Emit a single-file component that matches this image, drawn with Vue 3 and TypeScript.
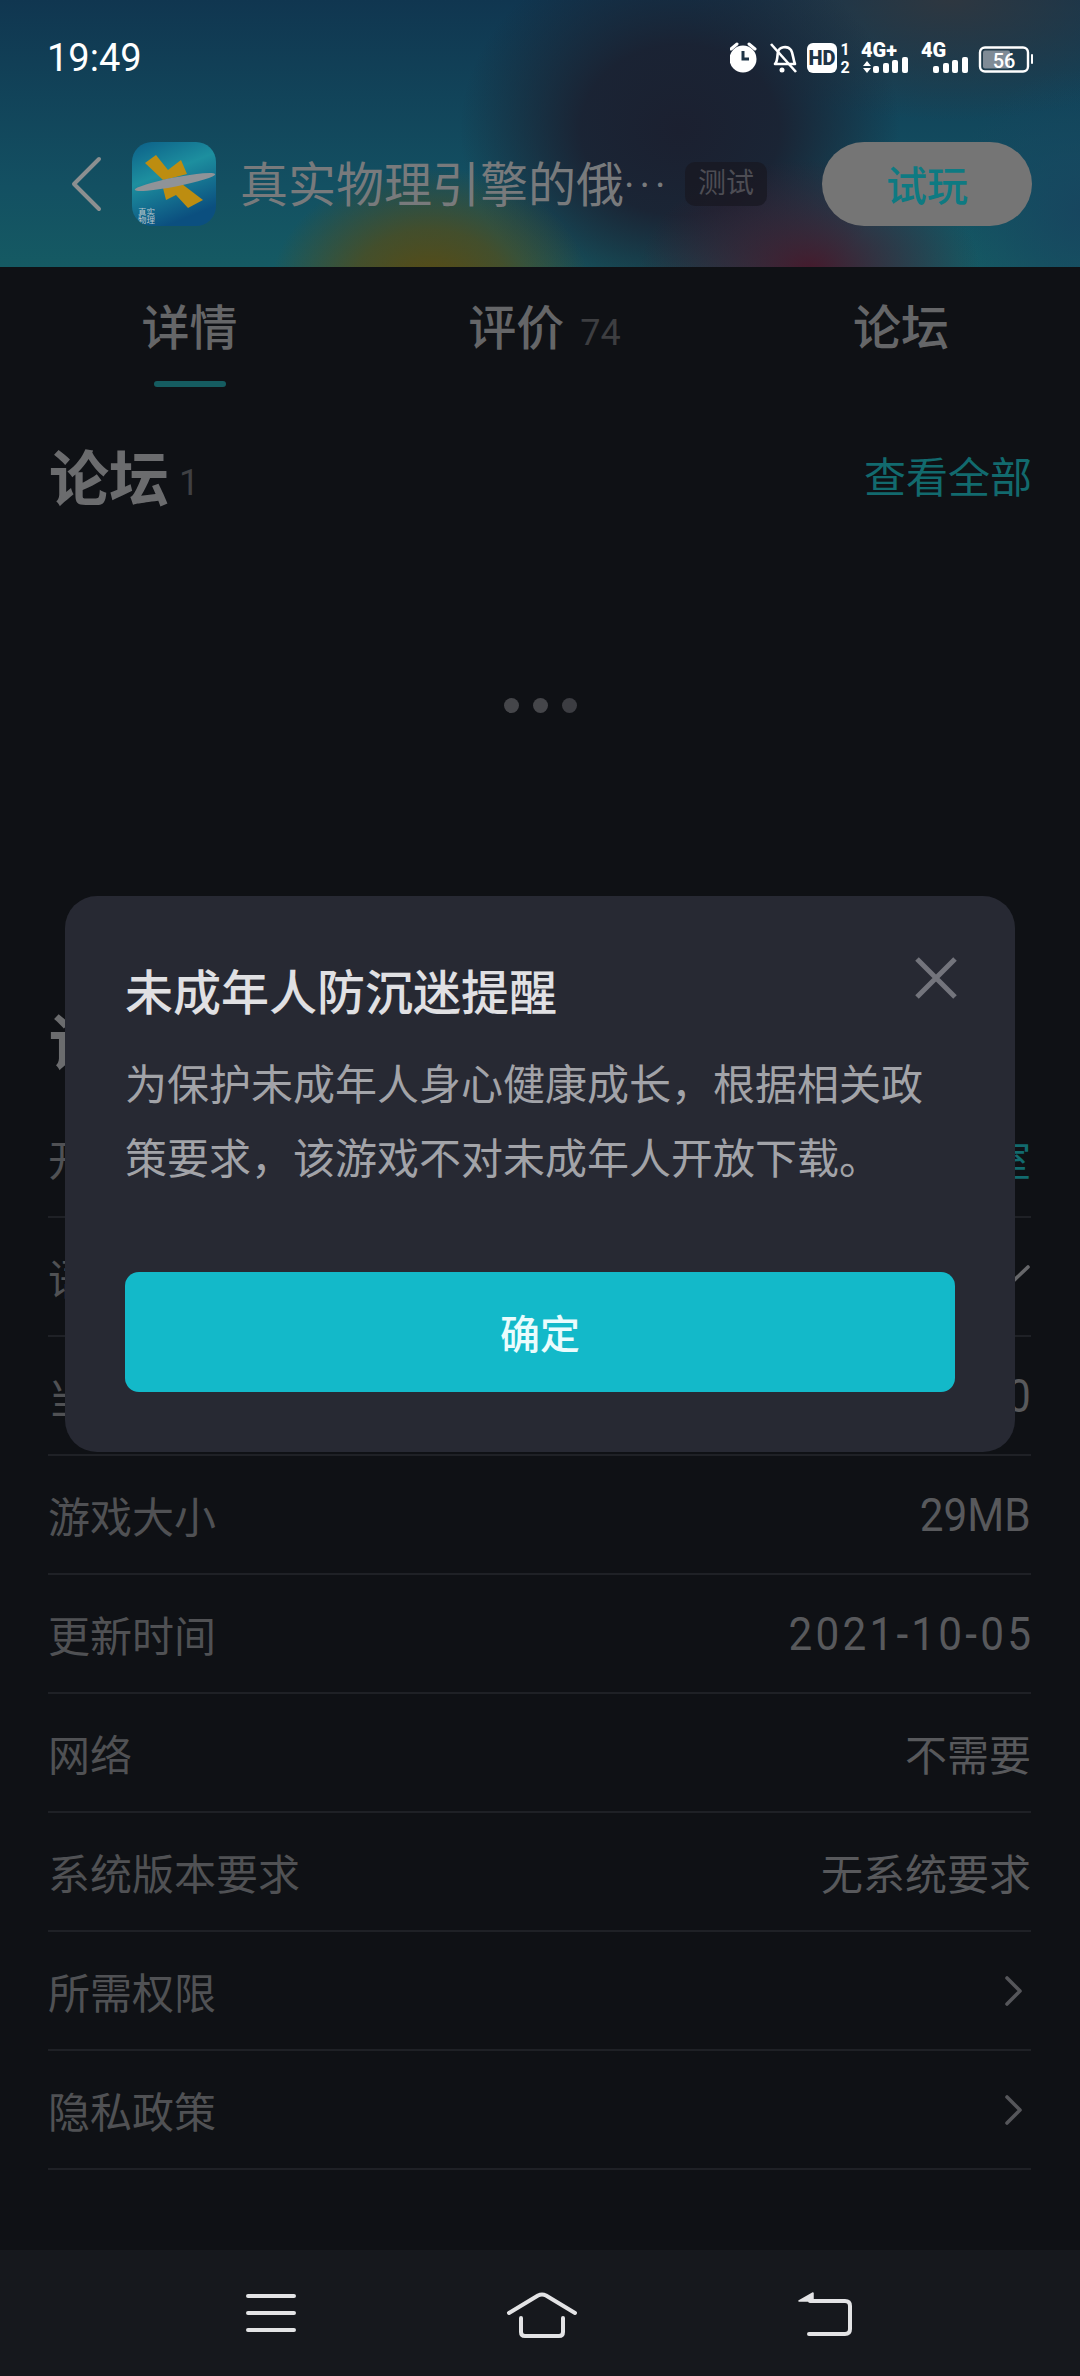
<script setup lang="ts">
interface InfoRow {
  label: string
  value?: string
  accent?: boolean
  num?: boolean
  wide?: boolean
  arrow?: 'right' | 'down'
}

const rows: InfoRow[] = [
  { label: '开发者', value: '物理工作室', accent: true },
  { label: '语言', value: '简体中文', arrow: 'down' },
  { label: '当前版本', value: '1.0', num: true },
  { label: '游戏大小', value: '29MB', num: true },
  { label: '更新时间', value: '2021-10-05', num: true, wide: true },
  { label: '网络', value: '不需要' },
  { label: '系统版本要求', value: '无系统要求' },
  { label: '所需权限', arrow: 'right' },
  { label: '隐私政策', arrow: 'right' }
]
</script>

<template>
  <div class="page">
    <header class="header">
      <div class="status">
        <span class="time">19:49</span>
        <svg class="status-icons" viewBox="730 35 310 45" width="310" height="45">
          <!-- alarm -->
          <circle cx="743" cy="59" r="13.5" fill="#fff" />
          <path d="M743 51v8h6" fill="none" stroke="#1f3446" stroke-width="3" />
          <path d="M731 49l6-5M755 49l-6-5" stroke="#fff" stroke-width="3" stroke-linecap="round" />
          <!-- muted bell -->
          <path d="M775 64c3-3 2-8 3-12 1-5 9-7 13-2 2 3 2 9 4 14z" fill="none" stroke="#fff" stroke-width="2.6" stroke-linejoin="round" />
          <path d="M771 44l25 28" stroke="#fff" stroke-width="2.6" />
          <circle cx="782" cy="70" r="2.5" fill="#fff" />
          <!-- HD -->
          <rect x="807" y="43" width="30" height="30" rx="6" fill="#fff" />
          <text x="822" y="65" class="hd">HD</text>
          <text x="845" y="55" class="sim">1</text>
          <text x="845" y="73" class="sim">2</text>
          <!-- 4G+ -->
          <text x="861" y="57" class="net">4G+</text>
          <path d="M863 66l4-5 4 5zM863 68h8l-4 5z" fill="#fff" />
          <rect x="873" y="66" width="6" height="7" rx="2" fill="#fff" />
          <rect x="883" y="63" width="6" height="10" rx="2" fill="#fff" />
          <rect x="892" y="60" width="6" height="13" rx="2" fill="#fff" />
          <rect x="902" y="57" width="6" height="16" rx="2" fill="#fff" />
          <!-- 4G -->
          <text x="921" y="57" class="net">4G</text>
          <rect x="933" y="66" width="6" height="7" rx="2" fill="#fff" />
          <rect x="943" y="63" width="6" height="10" rx="2" fill="#fff" />
          <rect x="952" y="60" width="6" height="13" rx="2" fill="#fff" />
          <rect x="962" y="57" width="6" height="16" rx="2" fill="#fff" />
          <!-- battery -->
          <rect x="980" y="47.5" width="48" height="24" rx="5" fill="none" stroke="#fff" stroke-width="2.4" />
          <rect x="983" y="50.5" width="27" height="18" rx="2" fill="#7f8b96" />
          <rect x="1031" y="54" width="2" height="10" rx="1" fill="#fff" />
          <text x="1004" y="68" class="batt">56</text>
        </svg>
      </div>

      <div class="bar">
        <svg class="back" viewBox="0 0 32 56" width="32" height="56">
          <path d="M28 3L3 28l25 25" fill="none" stroke="#8c8f90" stroke-width="4" stroke-linecap="round" stroke-linejoin="round" />
        </svg>
        <svg class="app-icon" viewBox="0 0 84 84" width="84" height="84">
          <defs>
            <linearGradient id="iconBg" x1="0" y1="0" x2="0.4" y2="1">
              <stop offset="0" stop-color="#0c5f88" />
              <stop offset="0.45" stop-color="#1d8f9f" />
              <stop offset="1" stop-color="#0b4f7f" />
            </linearGradient>
            <clipPath id="iconClip"><rect width="84" height="84" rx="20" /></clipPath>
          </defs>
          <g clip-path="url(#iconClip)">
            <rect width="84" height="84" fill="url(#iconBg)" />
            <path d="M13 21L24 13 36 28 49 18 55 32 40 36 31 38z" fill="#bd8d10" />
            <path d="M31 46L50 42 71 58 56 66 44 53 34 58z" fill="#bd8d10" />
            <ellipse cx="43" cy="40" rx="41" ry="4.5" transform="rotate(-11 43 40)" fill="#8f9398" />
            <text x="6" y="73" class="icon-text">真实</text>
            <text x="6" y="81" class="icon-text">物理</text>
          </g>
        </svg>
        <span class="title">真实物理引擎的俄</span>
        <span class="dots-more">···</span>
        <span class="tag">测试</span>
        <button class="try">试玩</button>
      </div>
    </header>

    <nav class="tabs">
      <div class="tab active">详情<i class="underline"></i></div>
      <div class="tab">评价<span class="count">74</span></div>
      <div class="tab">论坛</div>
    </nav>

    <section class="section-head">
      <h2>论坛<span class="count">1</span></h2>
      <a class="more">查看全部</a>
    </section>

    <div class="loading">
      <i></i><i></i><i class="fade"></i>
    </div>

    <section class="section-head info-head">
      <h2>详细信息</h2>
    </section>

    <ul class="rows">
      <li v-for="row in rows" :key="row.label" class="row">
        <span>{{ row.label }}</span>
        <span
          v-if="row.value"
          class="value"
          :class="{ accent: row.accent, num: row.num, wide: row.wide, 'with-down': row.arrow === 'down' }"
        >{{ row.value }}</span>
        <svg v-if="row.arrow === 'right'" class="chev" viewBox="0 0 20 32" width="20" height="32">
          <path d="M3 3l13 13L3 29" fill="none" stroke="#55565a" stroke-width="3.6" stroke-linecap="round" stroke-linejoin="round" />
        </svg>
        <svg v-if="row.arrow === 'down'" class="chev-down" viewBox="0 0 44 24" width="44" height="24">
          <path d="M3 3l19 18L41 3" fill="none" stroke="#66676a" stroke-width="3.6" stroke-linecap="round" stroke-linejoin="round" />
        </svg>
      </li>
    </ul>

    <div class="spacer"></div>

    <footer class="navbar">
      <svg viewBox="0 0 50 42" width="50" height="42">
        <path d="M2 4h46M2 21h46M2 38h46" stroke="#e3e3e5" stroke-width="4" stroke-linecap="round" />
      </svg>
      <svg viewBox="0 0 72 46" width="72" height="46">
        <path d="M3 21L32 3.5q4-2 8 0L69 21" fill="none" stroke="#e3e3e5" stroke-width="4" stroke-linecap="round" stroke-linejoin="round" />
        <path d="M15 26v14q0 4 4 4h34q4 0 4-4V26" fill="none" stroke="#e3e3e5" stroke-width="4" stroke-linecap="round" />
      </svg>
      <svg class="nav-back" viewBox="0 0 54 44" width="54" height="44">
        <path d="M1 9L15 1v8z" fill="#e3e3e5" stroke="#e3e3e5" stroke-width="1.5" stroke-linejoin="round" />
        <path d="M12 9h35q5 0 5 5v23q0 5-5 5H11" fill="none" stroke="#e3e3e5" stroke-width="4" stroke-linecap="round" />
      </svg>
    </footer>

    <div class="dialog">
      <svg class="close" viewBox="0 0 44 44" width="44" height="44">
        <path d="M3 3l38 38M41 3L3 41" stroke="#73747c" stroke-width="5" />
      </svg>
      <h3>未成年人防沉迷提醒</h3>
      <p>为保护未成年人身心健康成长，根据相关政策要求，该游戏不对未成年人开放下载。</p>
      <button class="ok">确定</button>
    </div>
  </div>
</template>

<style>
html,
body {
  margin: 0;
  background: #0f1115;
}
</style>

<style scoped>
.page {
  position: relative;
  width: 1080px;
  height: 2376px;
  overflow: hidden;
  display: flex;
  flex-direction: column;
  background: #0f1115;
  color: #505154;
  font-family: Roboto, "Noto Sans CJK SC", sans-serif;
}

.header {
  height: 267px;
  flex: none;
  background:
    radial-gradient(ellipse 160px 125px at 430px 292px, #5c4a0f 0%, rgba(92, 74, 15, 0.65) 50%, rgba(92, 74, 15, 0) 100%),
    radial-gradient(ellipse 170px 110px at 810px 270px, #451a2c 0%, rgba(69, 26, 44, 0) 100%),
    radial-gradient(ellipse 220px 190px at 680px 130px, #1b2030 0%, rgba(27, 32, 48, 0.9) 45%, rgba(27, 32, 48, 0) 100%),
    radial-gradient(ellipse 130px 140px at 1080px 210px, #17465f 0%, rgba(23, 70, 95, 0) 100%),
    radial-gradient(ellipse 260px 120px at 950px 0px, #2e3740 0%, rgba(46, 55, 64, 0) 100%),
    linear-gradient(180deg, #103650 0%, #135062 70%, #155a63 100%);
}

.status {
  height: 115px;
  display: flex;
  justify-content: space-between;
  align-items: flex-start;
  padding: 36px 40px 0 47px;
  box-sizing: border-box;
}

.time {
  font-size: 38px;
  line-height: 44px;
  color: #fff;
}

.status-icons {
  display: block;
  margin-top: -1px;
}

.hd {
  font: 900 20px Roboto, sans-serif;
  text-anchor: middle;
  fill: #1f3446;
}

.sim {
  font: 700 16px Roboto, sans-serif;
  text-anchor: middle;
  fill: #fff;
}

.net {
  font: 900 20px Roboto, sans-serif;
  fill: #fff;
}

.batt {
  font: 500 20px Roboto, sans-serif;
  text-anchor: middle;
  fill: #fff;
}

.bar {
  height: 84px;
  margin-top: 27px;
  display: flex;
  align-items: center;
  padding-left: 71px;
}

.back {
  margin-right: 29px;
  flex: none;
}

.app-icon {
  flex: none;
  margin-right: 24px;
}

.title {
  font-size: 48px;
  line-height: 84px;
  padding-top: 3px;
  color: #787a7c;
  white-space: nowrap;
}

.dots-more {
  font-size: 40px;
  letter-spacing: 5px;
  color: #787a7c;
  width: 61px;
  flex: none;
  padding-top: 3px;
}

.tag {
  width: 82px;
  height: 44px;
  flex: none;
  border-radius: 10px;
  background: rgba(24, 24, 34, 0.75);
  color: #4d4d54;
  font-size: 28px;
  line-height: 44px;
  text-align: center;
}

.try {
  width: 210px;
  height: 84px;
  margin-left: 55px;
  flex: none;
  border: 0;
  border-radius: 42px;
  padding-bottom: 3px;
  background: #757575;
  color: #0e7a82;
  font: 500 41px "Noto Sans CJK SC", sans-serif;
}

.tabs {
  height: 125px;
  flex: none;
  display: grid;
  grid-template-columns: repeat(3, 355px);
  padding-left: 12px;
  box-sizing: border-box;
}

.tab {
  position: relative;
  text-align: center;
  font-size: 48px;
  font-weight: 500;
  line-height: 68px;
  padding-top: 28px;
  color: #656668;
}

.tab:last-child {
  padding-left: 3px;
}

.tab .count {
  margin-left: 16px;
  font-size: 36px;
  font-weight: 400;
  color: #3d3e41;
}

.underline {
  position: absolute;
  left: 142px;
  top: 114px;
  width: 72px;
  height: 6px;
  border-radius: 3px;
  background: #155c60;
}

.section-head {
  height: 92px;
  margin-top: 36px;
  flex: none;
  display: flex;
  justify-content: space-between;
  align-items: center;
  padding: 0 49px;
}

.section-head h2 {
  margin: 0;
  font-size: 60px;
  font-weight: 700;
  color: #6b6c6e;
}

.section-head .count {
  margin-left: 10px;
  font-size: 36px;
  font-weight: 400;
  color: #3f4043;
  vertical-align: 6px;
}

.more {
  font-size: 42px;
  color: #126a6e;
  margin-right: -1px;
}

.loading {
  height: 366px;
  flex: none;
  display: flex;
  justify-content: center;
  align-items: center;
  gap: 14px;
  padding-top: 4px;
  box-sizing: border-box;
}

.loading i {
  width: 15px;
  height: 15px;
  border-radius: 50%;
  background: #45464a;
}

.loading i.fade {
  background: #3c3d42;
}

.info-head {
  margin-top: 106px;
}

.rows {
  list-style: none;
  margin: 15px 49px 0 48px;
  padding: 0;
}

.row {
  height: 119px;
  box-sizing: border-box;
  display: flex;
  justify-content: space-between;
  align-items: center;
  border-bottom: 2px solid #1f2126;
  font-size: 42px;
  position: relative;
}

.value {
  color: #58595c;
}

.accent {
  color: #126a6e;
}

.num {
  display: inline-block;
  font-size: 46px;
  transform: scaleX(0.92);
  transform-origin: right center;
}

.wide {
  letter-spacing: 3.5px;
  margin-right: -3px;
}

.with-down {
  margin-right: 60px;
}

.chev {
  margin-right: 7px;
}

.chev-down {
  position: absolute;
  right: 0;
  top: 46px;
}

.spacer {
  flex: 1;
}

.navbar {
  height: 126px;
  flex: none;
  background: #16181d;
  display: flex;
  align-items: flex-start;
  padding: 42px 0 0 246px;
  box-sizing: border-box;
  gap: 210px;
}

.nav-back {
  margin-left: 10px;
}

.dialog {
  position: absolute;
  left: 65px;
  top: 896px;
  width: 950px;
  height: 556px;
  box-sizing: border-box;
  padding: 63px 60px 0;
  border-radius: 32px;
  background: #272933;
  font-family: "Noto Sans CJK SC", sans-serif;
}

.close {
  position: absolute;
  right: 57px;
  top: 60px;
}

.dialog h3 {
  margin: 0;
  font-size: 48px;
  line-height: 60px;
  font-weight: 500;
  color: #e0e0e3;
}

.dialog p {
  margin: 26px 0 0;
  font-size: 42px;
  line-height: 74px;
  color: #a2a3a8;
}

.ok {
  display: block;
  width: 830px;
  height: 120px;
  margin-top: 79px;
  border: 0;
  border-radius: 14px;
  background: #13b9c9;
  color: #eafcfd;
  font: 500 40px "Noto Sans CJK SC", sans-serif;
}

.icon-text {
  font: 400 8.5px "Noto Sans CJK SC", sans-serif;
  fill: #b9c6cc;
}
</style>
